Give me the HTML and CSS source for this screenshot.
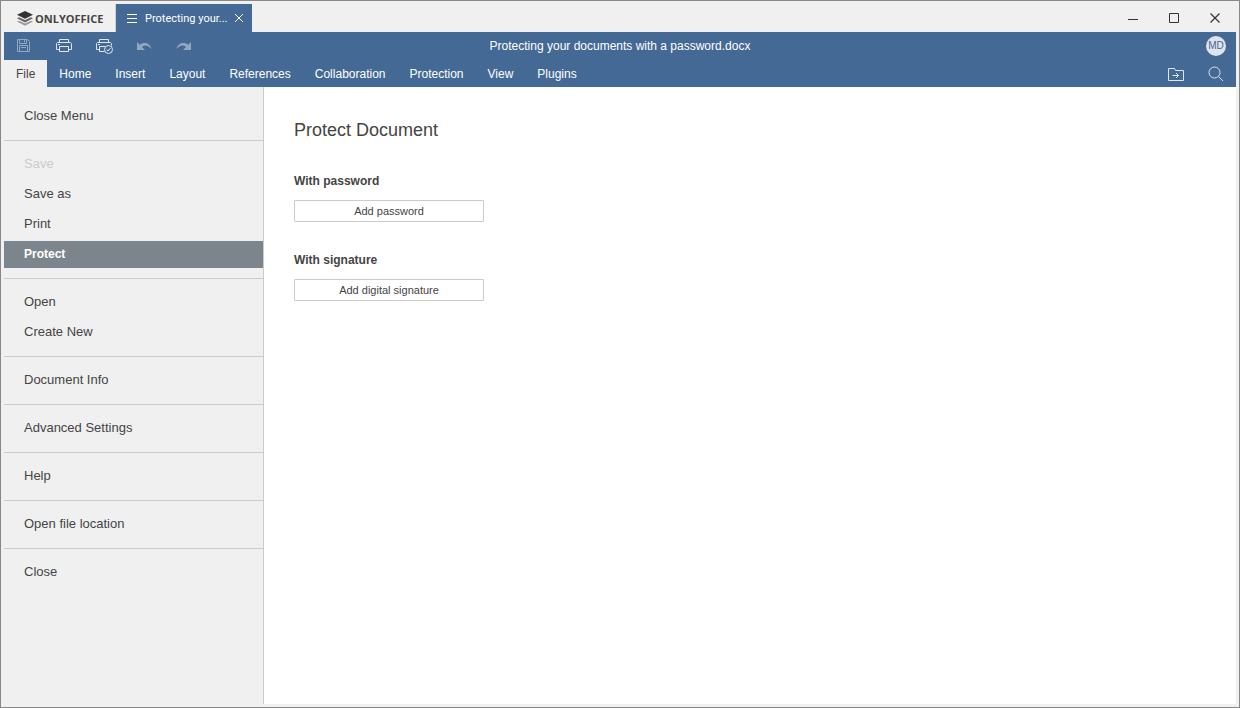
FILE: index.html
```html
<!DOCTYPE html>
<html lang="en">
<head>
  <meta charset="UTF-8">
  <meta name="viewport" content="width=device-width, initial-scale=1.0">
  <title>Protecting your documents with a password.docx</title>
  <link rel="stylesheet" href="styles.css">
</head>
<body>
  <div class="window">
    <header class="titlebar">
      <a class="brand" href="#">
        <svg class="brand-logo" width="16" height="15" viewBox="0 0 16 15">
          <path fill="#999" d="M0 10.600l2-.9 6 2.700 6-2.700 2 .9L8 14.800z"/>
          <path fill="#666" d="M0 7.200l2-.9 6 2.700 6-2.700 2 .9-8 4.200z"/>
          <path fill="#333" d="M8 0l8 3.800-8 3.900-8-3.900z"/>
        </svg>
        ONLYOFFICE
      </a>
      <div class="doc-tab">
        <svg width="10" height="9" viewBox="0 0 10 9"><path stroke="#fff" d="M0 .5h10M0 4.5h10M0 8.5h10"/></svg>
        <span class="doc-tab-name">Protecting your...</span>
        <button class="doc-tab-close" aria-label="Close tab">
          <svg width="8" height="8" viewBox="0 0 8 8"><path stroke="#fff" d="M0 0l8 8M8 0L0 8"/></svg>
        </button>
      </div>
      <div class="window-buttons">
        <button aria-label="Minimize"><svg width="10" height="10" viewBox="0 0 10 10"><path stroke="#333" d="M0 6.5h10"/></svg></button>
        <button aria-label="Maximize"><svg width="10" height="10" viewBox="0 0 10 10"><path fill="none" stroke="#333" d="M.5.5h9v9h-9z"/></svg></button>
        <button aria-label="Close"><svg width="10" height="10" viewBox="0 0 10 10"><path stroke="#333" stroke-width="1.2" d="M.5.5l9 9M9.500.5l-9 9"/></svg></button>
      </div>
    </header>

    <div class="toolbar">
      <div class="quick-actions">
        <button aria-label="Save" disabled>
          <svg width="20" height="20" viewBox="0 0 20 20"><path d="M3.500 3.500h10l2 2v10h-12zM5.500 3.500v4h7v-4M10.500 4v2.500M5.500 15.500v-6h8v6M7 11.500h5"/></svg>
        </button>
        <button aria-label="Print">
          <svg width="20" height="20" viewBox="0 0 20 20"><path d="M5.500 6.500v-3h9v3M5.500 13.500h-3v-6l1-1h13l1 1v6h-3M5.500 10.500h9v5h-9zM4 8.500h2"/></svg>
        </button>
        <button aria-label="Quick print">
          <svg width="20" height="20" viewBox="0 0 20 20"><path d="M5.500 6.500v-3h9v3M5.500 13.500h-3v-6l1-1h13l1 1v2M11 10.500H5.500v5h5M4 8.500h2"/><circle cx="14.500" cy="13.500" r="4"/><path d="M12.500 13.500l1.500 1.500 2.500-3"/></svg>
        </button>
        <button aria-label="Undo" disabled>
          <svg width="20" height="20" viewBox="0 0 20 20"><path class="solid" d="M3 6v8h8l-3-3C10.500 8.700 14 9 17.500 13 16 7 10 5.500 5.800 8.800z"/></svg>
        </button>
        <button aria-label="Redo" disabled>
          <svg width="20" height="20" viewBox="0 0 20 20"><path class="solid" d="M17 6v8H9l3-3C9.500 8.700 6 9 2.500 13 4 7 10 5.500 14.200 8.800z"/></svg>
        </button>
      </div>
      <div class="doc-title">Protecting your documents with a password.docx</div>
      <div class="user"><span class="avatar">MD</span></div>
    </div>

    <nav class="ribbon">
      <a class="active" href="#file">File</a>
      <a href="#home">Home</a>
      <a href="#insert">Insert</a>
      <a href="#layout">Layout</a>
      <a href="#references">References</a>
      <a href="#collaboration">Collaboration</a>
      <a href="#protection">Protection</a>
      <a href="#view">View</a>
      <a href="#plugins">Plugins</a>
      <div class="ribbon-actions">
        <button aria-label="Open file location">
          <svg width="20" height="20" viewBox="0 0 20 20"><path d="M2.500 4.500h6l1 2h8v10h-15zM6.500 11.500h6M10 9l2.500 2.500L10 14"/></svg>
        </button>
        <button aria-label="Search">
          <svg width="20" height="20" viewBox="0 0 20 20"><circle cx="8.500" cy="8.500" r="5.500"/><path d="M12.500 12.500l4.500 4.500"/></svg>
        </button>
      </div>
    </nav>

    <div class="workspace">
      <aside class="file-menu">
        <div class="group">
          <button>Close Menu</button>
        </div>
        <div class="group">
          <button disabled>Save</button>
          <button>Save as</button>
          <button>Print</button>
          <button class="active">Protect</button>
        </div>
        <div class="group">
          <button>Open</button>
          <button>Create New</button>
        </div>
        <div class="group">
          <button>Document Info</button>
        </div>
        <div class="group">
          <button>Advanced Settings</button>
        </div>
        <div class="group">
          <button>Help</button>
        </div>
        <div class="group">
          <button>Open file location</button>
        </div>
        <div class="group">
          <button>Close</button>
        </div>
      </aside>
      <main class="panel">
        <h1>Protect Document</h1>
        <section>
          <h2>With password</h2>
          <button class="btn">Add password</button>
        </section>
        <section>
          <h2>With signature</h2>
          <button class="btn">Add digital signature</button>
        </section>
      </main>
    </div>
  </div>
</body>
</html>
```
FILE: styles.css
```css
* {
  box-sizing: border-box;
}
body {
  margin: 0;
  font-family: "Liberation Sans", Arial, sans-serif;
  font-size: 12px;
  color: #444444;
}
button {
  margin: 0;
  padding: 0;
  border: none;
  background: none;
  font-family: inherit;
  color: inherit;
}
a {
  color: inherit;
  text-decoration: none;
}
svg {
  display: block;
}
.window {
  display: flex;
  flex-direction: column;
  min-height: 100vh;
  padding: 3px;
  border: 1px solid #888888;
  background-color: #f0f0f0;
}

/* title bar */
.titlebar {
  display: flex;
  height: 28px;
}
.brand {
  display: flex;
  align-items: center;
  gap: 2px;
  width: 112px;
  padding-left: 13px;
  border-right: 1px solid #d0d0d0;
  font-family: "Open Sans", sans-serif;
  font-size: 11px;
  font-weight: bold;
}
.doc-tab {
  display: flex;
  align-items: center;
  width: 136px;
  padding: 0 9px 0 11px;
  background-color: #446995;
  color: #ffffff;
  font-family: Roboto, sans-serif;
  font-size: 11px;
}
.doc-tab-name {
  flex: 1;
  margin-left: 8px;
  white-space: nowrap;
}
.window-buttons {
  display: flex;
  align-items: center;
  gap: 31px;
  margin-left: auto;
  padding-right: 16px;
}

/* toolbar */
.toolbar {
  display: grid;
  grid-template-columns: 1fr auto 1fr;
  align-items: center;
  height: 28px;
  background-color: #446995;
  color: #ffffff;
}
.quick-actions {
  display: flex;
  gap: 20px;
  padding-left: 10px;
}
.quick-actions svg,
.ribbon-actions svg {
  fill: none;
  stroke: #dfe6ee;
}
.quick-actions button:disabled {
  opacity: 0.5;
}
.quick-actions .solid {
  fill: #dfe6ee;
  stroke: none;
}
.user {
  display: flex;
  justify-content: flex-end;
  padding-right: 10px;
}
.avatar {
  width: 20px;
  height: 20px;
  border-radius: 50%;
  background-color: #dfe4ec;
  color: #446995;
  font-size: 10px;
  line-height: 20px;
  text-align: center;
}

/* ribbon tabs */
.ribbon {
  display: flex;
  height: 27px;
  background-color: #446995;
  color: #ffffff;
  line-height: 28px;
}
.ribbon a {
  padding: 0 12px;
}
.ribbon a.active {
  background-color: #f0f0f0;
  color: #444444;
}
.ribbon-actions {
  display: flex;
  align-items: center;
  gap: 20px;
  margin-left: auto;
  padding-right: 10px;
}

/* file menu */
.workspace {
  display: flex;
  flex: 1;
}
.file-menu {
  width: 260px;
  padding-top: 6px;
  border-right: 1px solid #cbcbcb;
}
.group {
  display: flex;
  flex-direction: column;
  gap: 3px;
  padding: 10px 0;
}
.group + .group {
  border-top: 1px solid #cbcbcb;
}
.group button {
  height: 27px;
  padding: 0 20px 2px;
  font-size: 13px;
  text-align: left;
}
.group button:disabled {
  color: #cccccc;
}
.group button.active {
  background-color: #7d858c;
  color: #ffffff;
  font-size: 12px;
  font-weight: bold;
}

/* protect panel */
.panel {
  flex: 1;
  padding: 32px 30px;
  background-color: #ffffff;
}
.panel h1 {
  margin: 0 0 32px;
  font-size: 18px;
  font-weight: normal;
  line-height: 22px;
}
.panel section {
  margin-bottom: 30px;
}
.panel h2 {
  margin: 0 0 11px;
  font-size: 12px;
  line-height: 16px;
}
.btn {
  width: 190px;
  height: 22px;
  border: 1px solid #cbcbcb;
  border-radius: 1px;
  background-color: #ffffff;
  font-size: 11px;
}
```
